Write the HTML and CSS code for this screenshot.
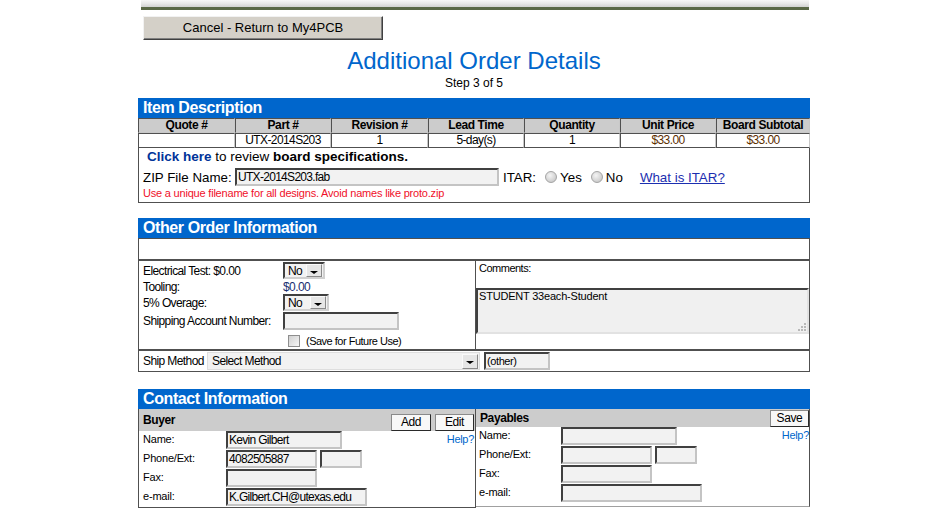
FILE: index.html
```html
<!DOCTYPE html>
<html lang="en">
<head>
<meta charset="utf-8">
<title>Additional Order Details</title>
<link rel="stylesheet" href="styles.css">
</head>
<body>
<div class="page">
  <div class="topbar"></div>
  <div class="cancel-row"><button class="btn-cancel" type="button">Cancel - Return to My4PCB</button></div>
  <h1 class="title">Additional Order Details</h1>
  <div class="step">Step 3 of 5</div>

  <section class="sec-item">
    <div class="sec-head">Item Description</div>
    <table class="items">
      <colgroup><col class="c97"><col class="c96"><col class="c97"><col class="c96"><col class="c96"><col class="c96"><col class="c94"></colgroup>
      <thead><tr><th>Quote #</th><th>Part #</th><th>Revision #</th><th>Lead Time</th><th>Quantity</th><th>Unit Price</th><th>Board Subtotal</th></tr></thead>
      <tbody><tr><td></td><td>UTX-2014S203</td><td>1</td><td>5-day(s)</td><td>1</td><td class="price">$33.00</td><td class="price">$33.00</td></tr></tbody>
    </table>
    <div class="item-body">
      <div class="review"><a class="click" href="#">Click here</a> to review <b>board specifications.</b></div>
      <div class="zip-row">
        <span class="zip-label">ZIP File Name:</span>
        <div class="field zip-field">UTX-2014S203.fab</div>
        <span class="itar">ITAR:</span>
        <span class="radio"></span><span class="radio-label">Yes</span>
        <span class="radio"></span><span class="radio-label">No</span>
        <a class="itar-link" href="#">What is ITAR?</a>
      </div>
      <div class="warn">Use a unique filename for all designs. Avoid names like proto.zip</div>
    </div>
  </section>

  <section class="sec-other">
    <div class="sec-head">Other Order Information</div>
    <div class="other-body">
      <div class="blank-row"></div>
      <div class="opts">
        <div class="opt-row r1"><span class="opt-label">Electrical Test: $0.00</span><div class="select sel-42"><span class="sel-text">No</span><span class="sel-btn"></span></div></div>
        <div class="opt-row r2"><span class="opt-label">Tooling:</span><span class="tooling">$0.00</span></div>
        <div class="opt-row r3"><span class="opt-label">5% Overage:</span><div class="select sel-46"><span class="sel-text">No</span><span class="sel-btn"></span></div></div>
        <div class="opt-row r4"><span class="opt-label">Shipping Account Number:</span><div class="field ship-acct"></div></div>
        <div class="opt-row r5"><span class="opt-label"></span><span class="checkbox"></span><span class="save-label">(Save for Future Use)</span></div>
      </div>
      <div class="comments">
        <div class="comments-label">Comments:</div>
        <div class="textarea">
          <span>STUDENT 33each-Student</span>
          <svg class="grip" viewBox="0 0 10 10" width="10" height="10"><g fill="#b8b8b8"><rect x="8" y="2" width="2" height="2"/><rect x="5" y="5" width="2" height="2"/><rect x="8" y="5" width="2" height="2"/><rect x="2" y="8" width="2" height="2"/><rect x="5" y="8" width="2" height="2"/><rect x="8" y="8" width="2" height="2"/></g></svg>
        </div>
      </div>
      <div class="ship-row">
        <span class="ship-label">Ship Method</span>
        <div class="select ship-select"><span class="sel-text">Select Method</span><span class="sel-btn"></span></div>
        <div class="field other-field">(other)</div>
      </div>
    </div>
  </section>

  <section class="sec-contact">
    <div class="sec-head">Contact Information</div>
    <div class="contact-body">
      <div class="buyer">
        <div class="panel-head buyer-head">
          <span class="panel-title">Buyer</span>
          <div class="head-btns"><button class="btn-sm btn-add" type="button">Add</button><button class="btn-sm btn-edit" type="button">Edit</button></div>
        </div>
        <div class="c-row"><span class="c-label">Name:</span><div class="field f-name">Kevin Gilbert</div><a class="help" href="#">Help?</a></div>
        <div class="c-row"><span class="c-label">Phone/Ext:</span><div class="field f-phone">4082505887</div><div class="field f-ext"></div></div>
        <div class="c-row"><span class="c-label">Fax:</span><div class="field f-phone"></div></div>
        <div class="c-row"><span class="c-label">e-mail:</span><div class="field f-email">K.Gilbert.CH@utexas.edu</div></div>
      </div>
      <div class="payables">
        <div class="panel-head pay-head">
          <span class="panel-title">Payables</span>
          <button class="btn-sm btn-save" type="button">Save</button>
        </div>
        <div class="c-row"><span class="c-label">Name:</span><div class="field f-name"></div><a class="help" href="#">Help?</a></div>
        <div class="c-row"><span class="c-label">Phone/Ext:</span><div class="field f-phone"></div><div class="field f-ext"></div></div>
        <div class="c-row"><span class="c-label">Fax:</span><div class="field f-phone"></div></div>
        <div class="c-row"><span class="c-label">e-mail:</span><div class="field f-email"></div></div>
      </div>
    </div>
  </section>
</div>
</body>
</html>
```

FILE: styles.css
```css
* { box-sizing: border-box; }
html, body { margin: 0; padding: 0; background: #fff; }
body { font-family: "Liberation Sans", Arial, sans-serif; font-size: 12px; color: #000; }

.page { width: 672px; margin-left: 138px; }

.topbar {
  width: 668px; margin-left: 3px; height: 10px;
  background: linear-gradient(to bottom, #f8f8f8 0%, #e8e8e8 50%, #d2d2d2 100%);
  border-bottom: 3px solid #5a6847;
}

.cancel-row { padding: 6px 0 0 5px; }
.btn-cancel {
  display: block; width: 240px; height: 24px; margin: 0; padding: 0;
  background: #d4d0c8; border: 1px solid;
  border-color: #f2f2f2 #404040 #404040 #f2f2f2;
  box-shadow: inset -1px -1px 0 #808080;
  font-family: inherit; font-size: 13px; color: #000; line-height: 22px; text-align: center;
}

.title { margin: 7px 0 0; font-size: 24px; line-height: 28px; font-weight: normal; color: #0066cc; text-align: center; }
.step { font-size: 12px; line-height: 14px; text-align: center; margin-top: 1px; }

.sec-item { margin-top: 8px; }
.sec-other { margin-top: 15px; }
.sec-contact { margin-top: 17px; }

.sec-head {
  height: 20px; background: #0066cc; color: #fff; font-weight: bold;
  font-size: 16px; letter-spacing: -0.4px; line-height: 20px; padding-left: 5px; white-space: nowrap;
}

/* item table */
.items { width: 672px; table-layout: fixed; border-collapse: separate; border-spacing: 0; }
.c97 { width: 97px; }
.c96 { width: 96px; }
.c94 { width: 94px; }
.items th, .items td {
  padding: 0; border: 1px solid; border-color: #505050 #c8c8c8 #c8c8c8 #505050;
  text-align: center; font-size: 12px; line-height: 13px; white-space: nowrap; overflow: hidden;
}
.items th { background: #cccccc; font-weight: bold; letter-spacing: -0.4px; }
.items td { background: #fff; letter-spacing: -0.6px; border-bottom-color: #505050; }
.items td.price { color: #5c2e00; }

.item-body { border: 1px solid #505050; border-top: 0; padding-bottom: 2px; }
.review { height: 18px; line-height: 18px; padding-left: 8px; font-size: 13.5px; white-space: nowrap; }
.review .click { color: #003399; font-weight: bold; text-decoration: none; }
.zip-row {
  display: flex; align-items: center; height: 20px; margin-top: 1px; padding-left: 4px;
  font-size: 13.33px; white-space: nowrap;
}
.zip-label { width: 92px; flex: none; }
.zip-field { width: 264px; flex: none; }
.itar { margin-left: 4px; }
.radio {
  width: 12px; height: 12px; flex: none; margin-left: 9px; border-radius: 50%;
  border: 1px solid #a4a4a4;
  background: radial-gradient(circle at 40% 35%, #f4f4f4 0%, #d4d4d4 60%, #bcbcbc 100%);
}
.radio-label { margin-left: 3px; }
.itar-link { margin-left: 17px; color: #1c2fb0; text-decoration: underline; }
.warn {
  height: 13px; line-height: 13px; padding-left: 4px; font-size: 11px; letter-spacing: -0.2px;
  color: #f0102a; white-space: nowrap;
}

/* generic fields */
.field {
  height: 18px; background: #f2f2f2; border: 2px solid;
  border-color: #404040 #c4c4c4 #c4c4c4 #404040;
  font-size: 12px; letter-spacing: -0.7px; line-height: 14px; padding: 0 1px;
  white-space: nowrap; overflow: hidden; flex: none;
}
.select {
  display: flex; align-items: center; justify-content: space-between; flex: none;
  height: 17px; background: #f2f2f2; border: 2px solid;
  border-color: #404040 #d0d0d0 #d0d0d0 #404040;
  padding: 0 1px 0 3px; font-size: 12px; letter-spacing: -0.6px; white-space: nowrap;
}
.sel-btn {
  width: 16px; height: 13px; flex: none; display: flex; align-items: center; justify-content: center;
  padding-top: 3px; background: #e6e6e6; border: 1px solid;
  border-color: #fafafa #8a8a8a #8a8a8a #fafafa;
}
.sel-btn::after {
  content: ""; border-left: 4px solid transparent; border-right: 4px solid transparent;
  border-top: 3px solid #000;
}

/* other order information */
.other-body { display: grid; grid-template-columns: 338px 334px; }
.blank-row { grid-column: 1 / -1; height: 22px; border: 1px solid #505050; }
.opts { border: 1px solid #505050; padding: 1px 0 1px 4px; }
.opt-row { display: flex; align-items: center; font-size: 12px; letter-spacing: -0.6px; white-space: nowrap; }
.opt-label { width: 140px; flex: none; }
.r1 { height: 17px; }
.r2 { height: 15px; }
.r3 { height: 17px; }
.r4 { height: 18px; margin-top: 1px; }
.r5 { height: 14px; margin-top: 4px; }
.tooling { color: #1a3070; }
.sel-42 { width: 42px; }
.sel-46 { width: 46px; }
.ship-acct { width: 116px; }
.checkbox {
  width: 12px; height: 12px; flex: none; margin-left: 5px;
  border: 1px solid #8e8e8e; background: linear-gradient(135deg, #d0d0d0, #f6f6f6);
}
.save-label { margin-left: 6px; font-size: 11px; letter-spacing: -0.5px; }

.comments { border: 1px solid #505050; border-left: 0; padding-top: 1px; }
.comments-label { padding-left: 3px; font-size: 11px; letter-spacing: -0.5px; line-height: 13px; }
.textarea {
  margin-top: 13px; height: 46px; display: flex; flex-direction: column; justify-content: space-between;
  background: #f0f0f0; border: 2px solid; border-color: #404040 #e2e2e2 #e2e2e2 #404040;
  padding-left: 1px; font-size: 11px; letter-spacing: -0.2px; line-height: 13px;
}
.grip { align-self: flex-end; width: 10px; height: 10px; margin: 0 1px 1px 0; }

.ship-row { grid-column: 1 / -1; height: 22px; border: 1px solid #505050; display: flex; align-items: center; }
.ship-label { width: 68px; flex: none; padding-left: 4px; font-size: 12px; letter-spacing: -0.6px; white-space: nowrap; }
.ship-select { width: 273px; height: 18px; border: 1px solid #dedede; padding-left: 4px; }
.ship-select .sel-btn { height: 15px; }
.other-field { width: 66px; margin-left: 4px; font-size: 11px; letter-spacing: -0.4px; }

/* contact */
.contact-body { display: grid; grid-template-columns: 338px 334px; align-items: start; }
.buyer { border: 1px solid #505050; border-top: 0; }
.payables { border-right: 1px solid #505050; border-bottom: 1px solid #a0a0a0; padding-bottom: 3px; }
.panel-head { display: flex; justify-content: space-between; background: #cccccc; }
.buyer-head { height: 22px; padding: 0 1px 0 4px; }
.pay-head { height: 18px; padding-left: 4px; }
.panel-title { font-weight: bold; font-size: 12px; letter-spacing: -0.4px; align-self: center; }
.head-btns { display: flex; gap: 4px; align-items: flex-end; }
.btn-sm {
  height: 17px; padding: 0; margin: 0; background: #f8f8f8; border: 1px solid;
  border-color: #8a8a8a #2a2a2a #2a2a2a #8a8a8a;
  font-family: inherit; font-size: 12px; letter-spacing: -0.4px; color: #000; line-height: 15px;
}
.btn-add { width: 40px; }
.btn-edit { width: 39px; }
.btn-save { width: 39px; align-self: flex-end; }

.c-row { display: flex; align-items: flex-start; height: 19px; }
.buyer .c-row { padding: 0 1px 0 4px; }
.payables .c-row { padding-left: 3px; }
.c-label { width: 83px; flex: none; line-height: 17px; font-size: 11px; letter-spacing: -0.2px; white-space: nowrap; }
.payables .c-label { width: 82px; }
.help { margin-left: auto; font-size: 11px; letter-spacing: -0.3px; line-height: 17px; color: #0066cc; text-decoration: none; }
.f-name { width: 116px; }
.f-phone { width: 91px; }
.f-ext { width: 42px; margin-left: 3px; }
.f-email { width: 141px; }
```
